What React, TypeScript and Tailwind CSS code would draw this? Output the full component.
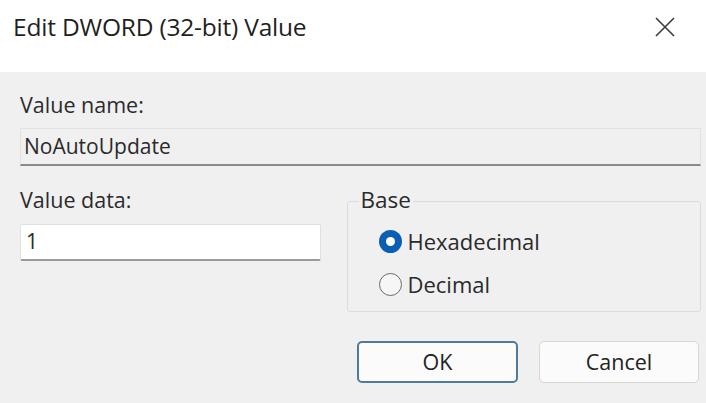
import React from "react";

export default function App() {
  const font = { fontFamily: '"Segoe UI", "Open Sans", "Liberation Sans", sans-serif' };
  return (
    <div className="w-[706px] h-[403px] bg-[#f0f0f0] flex flex-col overflow-hidden text-[#222]" style={font}>
      <div className="h-[72px] bg-white flex items-start justify-between pl-[13px] pr-[30px] pt-[12px]">
        <div className="text-[24.5px] leading-[30px] text-[#1f1f1f] tracking-[-0.2px]">Edit DWORD (32-bit) Value</div>
        <svg width="22" height="22" viewBox="0 0 22 22" className="mt-[4px]">
          <path d="M2 2 L20 20 M20 2 L2 20" stroke="#3a3a3a" strokeWidth="1.6" fill="none" />
        </svg>
      </div>
      <div className="flex flex-col pl-[20px] pr-[5px] pt-[20px]">
        <div className="text-[21.5px] leading-[26px] text-[#2b2b2b]">Value name:</div>
        <div className="mt-[10px] h-[38px] w-[681px] border border-[#e2e2e2] border-b-[#8a8a8a] border-b-2 bg-[#f0f0f0] flex items-center pl-[3px] text-[21px] text-[#2a2a2a]">
          NoAutoUpdate
        </div>
        <div className="flex mt-[21px]">
          <div className="flex flex-col w-[327px]">
            <div className="text-[21.5px] leading-[26px] text-[#2b2b2b]">Value data:</div>
            <div className="mt-[11px] h-[37px] w-[301px] bg-white border border-[#e0e0e0] border-b-2 border-b-[#9a9a9a] rounded-[2px] flex items-center pl-[5px] text-[21px] text-[#2a2a2a]">
              1
            </div>
          </div>
          <div className="relative mt-[14px] w-[355px] h-[111px] border border-[#dcdcdc] rounded-[3px]">
            <div className="absolute left-[11px] top-[-15px] px-[2px] bg-[#f0f0f0] text-[22.5px] leading-[26px] text-[#2b2b2b]">Base</div>
            <div className="flex flex-col pl-[31px] pt-[26px] gap-[17px]">
              <div className="flex items-center gap-[6px] h-[26px]">
                <div className="w-[23px] h-[23px] rounded-full bg-[#0a5fb4] flex items-center justify-center">
                  <div className="w-[9px] h-[9px] rounded-full bg-white" />
                </div>
                <span className="text-[22px] leading-[26px] text-[#2a2a2a]">Hexadecimal</span>
              </div>
              <div className="flex items-center gap-[6px] h-[26px]">
                <div className="w-[23px] h-[23px] rounded-full border-[1.5px] border-[#6a6a6a] bg-[#f6f6f6]" />
                <span className="text-[22px] leading-[26px] text-[#2a2a2a]">Decimal</span>
              </div>
            </div>
          </div>
        </div>
        <div className="flex justify-end gap-[21px] mt-[29px] pr-[2px]">
          <button className="w-[161px] h-[42px] rounded-[5px] border-2 border-[#4f7a99] bg-[#fbfbfb] text-[21.5px] text-[#222]">OK</button>
          <button className="w-[160px] h-[42px] rounded-[5px] border border-[#d6d6d6] bg-[#fbfbfb] text-[21.5px] text-[#222]">Cancel</button>
        </div>
      </div>
    </div>
  );
}
